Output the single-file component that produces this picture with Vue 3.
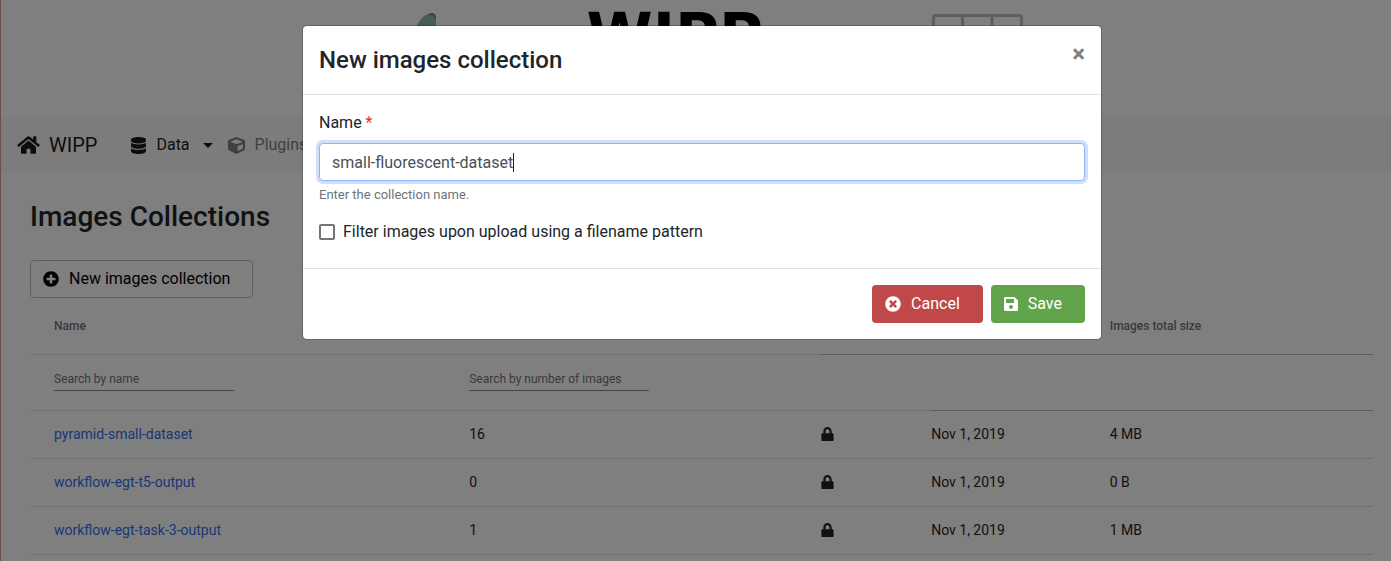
<script setup>
import { ref } from 'vue'

const name = ref('small-fluorescent-dataset')
const useFilter = ref(false)
const rows = [
  { name: 'pyramid-small-dataset', images: 16, date: 'Nov 1, 2019', size: '4 MB' },
  { name: 'workflow-egt-t5-output', images: 0, date: 'Nov 1, 2019', size: '0 B' },
  { name: 'workflow-egt-task-3-output', images: 1, date: 'Nov 1, 2019', size: '1 MB' },
]
</script>

<template>
  <div class="page">
    <header class="banner">
      <svg class="leaf" viewBox="0 0 50 104" aria-hidden="true">
        <path fill="#94b4b0" d="M10 24C17 9 21 3 27 1Q35-2 35 5V104H10Z" />
        <path fill="#6d8f8b" d="M27 1Q35-2 35 6L32 3Z" />
      </svg>
      <div class="wordmark">WIPP</div>
      <svg class="plate" viewBox="0 0 91 90" aria-hidden="true">
        <rect x="1.5" y="2.5" width="88" height="86" rx="2" />
        <path d="M30.5 2V89M60 2V89M1 31.5H90M1 60H90" />
      </svg>
    </header>

    <nav class="navbar">
      <a class="brand" href="#">
        <svg class="i-home" viewBox="0 0 576 512" aria-hidden="true"><path d="M280.37 148.26L96 300.11V464a16 16 0 0 0 16 16l112.06-.29a16 16 0 0 0 15.92-16V368a16 16 0 0 1 16-16h64a16 16 0 0 1 16 16v95.64a16 16 0 0 0 16 16.05L464 480a16 16 0 0 0 16-16V300L295.67 148.26a12.19 12.19 0 0 0-15.3 0zM571.6 251.47L488 182.56V44.05a12 12 0 0 0-12-12h-56a12 12 0 0 0-12 12v72.61L318.47 43a48 48 0 0 0-61 0L4.34 251.47a12 12 0 0 0-1.6 16.9l25.5 31A12 12 0 0 0 45.15 301l235.22-193.74a12.19 12.19 0 0 1 15.3 0L530.9 301a12 12 0 0 0 16.9-1.6l25.5-31a12 12 0 0 0-1.7-16.93z" /></svg>
        WIPP
      </a>
      <a class="nav-link" href="#">
        <svg class="i-data" viewBox="0 0 448 512" aria-hidden="true"><path d="M448 73.143v45.714C448 159.143 347.667 192 224 192S0 159.143 0 118.857V73.143C0 32.857 100.333 0 224 0s224 32.857 224 73.143zM448 176v102.857C448 319.143 347.667 352 224 352S0 319.143 0 278.857V176c48.125 33.143 136.208 48.572 224 48.572S399.874 209.143 448 176zm0 160v102.857C448 479.143 347.667 512 224 512S0 479.143 0 438.857V336c48.125 33.143 136.208 48.572 224 48.572S399.874 369.143 448 336z" /></svg>
        Data
        <span class="caret-down"></span>
      </a>
      <a class="nav-link muted" href="#">
        <svg class="i-cube" viewBox="0 0 512 512" aria-hidden="true"><path d="M239.1 6.3l-208 78c-18.7 7-31.1 25-31.1 45v225.1c0 18.2 10.3 34.8 26.5 42.9l208 104c13.5 6.8 29.4 6.8 42.9 0l208-104c16.3-8.1 26.5-24.8 26.5-42.9V129.3c0-20-12.4-37.9-31.1-44.9l-208-78C262 2.2 250 2.2 239.1 6.3zM256 68.4l192 72v1.1l-192 78-192-78v-1.1l192-72zm32 356V275.5l160-65v133.9l-160 80z" /></svg>
        Plugins
      </a>
    </nav>

    <main class="content">
      <h1>Images Collections</h1>
      <button class="btn outline" type="button">
        <svg class="i-btn" viewBox="0 0 512 512" aria-hidden="true"><path d="M256 8C119 8 8 119 8 256s111 248 248 248 248-111 248-248S393 8 256 8zm144 276c0 6.6-5.4 12-12 12h-92v92c0 6.6-5.4 12-12 12h-56c-6.6 0-12-5.4-12-12v-92h-92c-6.6 0-12-5.4-12-12v-56c0-6.6 5.4-12 12-12h92v-92c0-6.6 5.4-12 12-12h56c6.6 0 12 5.4 12 12v92h92c6.6 0 12 5.4 12 12v56z" /></svg>
        New images collection
      </button>

      <table>
        <colgroup>
          <col class="c-name" /><col class="c-images" /><col class="c-lock" /><col class="c-date" /><col />
        </colgroup>
        <thead>
          <tr class="head">
            <th scope="col">Name</th>
            <th scope="col" aria-label="Number of images"></th>
            <th scope="col" class="strong" aria-label="Locked"></th>
            <th scope="col" class="strong" aria-label="Creation date"></th>
            <th scope="col" class="strong">Images total size</th>
          </tr>
          <tr class="filters">
            <td><input type="text" placeholder="Search by name" aria-label="Search by name" /></td>
            <td><input type="text" placeholder="Search by number of images" aria-label="Search by number of images" /></td>
            <td></td>
            <td class="strong"></td>
            <td class="strong"></td>
          </tr>
        </thead>
        <tbody>
          <tr v-for="row in rows" :key="row.name">
            <td><a href="#">{{ row.name }}</a></td>
            <td>{{ row.images }}</td>
            <td><svg class="i-lock" viewBox="0 0 448 512" role="img" aria-label="Locked"><path d="M400 224h-24v-72C376 68.2 307.8 0 224 0S72 68.2 72 152v72H48c-26.5 0-48 21.5-48 48v192c0 26.5 21.5 48 48 48h352c26.5 0 48-21.5 48-48V272c0-26.5-21.5-48-48-48zm-104 0H152v-72c0-39.7 32.3-72 72-72s72 32.3 72 72v72z" /></svg></td>
            <td>{{ row.date }}</td>
            <td>{{ row.size }}</td>
          </tr>
        </tbody>
      </table>
    </main>

    <div class="backdrop">
      <form class="modal" role="dialog" aria-labelledby="modal-title" @submit.prevent>
        <div class="modal-header">
          <h2 id="modal-title">New images collection</h2>
          <button class="close" type="button" aria-label="Close">×</button>
        </div>
        <div class="modal-body">
          <label class="field-label" for="collection-name">Name <span class="required">*</span></label>
          <div class="field">
            <input id="collection-name" v-model="name" type="text" />
            <span class="text-cursor"></span>
          </div>
          <small>Enter the collection name.</small>
          <label class="check"><input v-model="useFilter" type="checkbox" />Filter images upon upload using a filename pattern</label>
        </div>
        <div class="modal-footer">
          <button class="btn danger" type="button">
            <svg class="i-btn" viewBox="0 0 512 512" aria-hidden="true"><path d="M256 8C119 8 8 119 8 256s111 248 248 248 248-111 248-248S393 8 256 8zm121.6 313.1c4.7 4.7 4.7 12.3 0 17L338 377.6c-4.7 4.7-12.3 4.7-17 0L256 312l-65.1 65.6c-4.7 4.7-12.3 4.7-17 0L134.4 338c-4.7-4.7-4.7-12.3 0-17l65.6-65-65.6-65.1c-4.7-4.7-4.7-12.3 0-17l39.6-39.6c4.7-4.7 12.3-4.7 17 0l65 65.7 65.1-65.6c4.7-4.7 12.3-4.7 17 0l39.6 39.6c4.7 4.7 4.7 12.3 0 17L312 256l65.6 65.1z" /></svg>
            Cancel
          </button>
          <button class="btn success" type="submit">
            <svg class="i-save" viewBox="0 0 448 512" aria-hidden="true"><path d="M433.941 129.941l-83.882-83.882A48 48 0 0 0 316.118 32H48C21.49 32 0 53.49 0 80v352c0 26.51 21.49 48 48 48h352c26.51 0 48-21.49 48-48V163.882a48 48 0 0 0-14.059-33.941zM224 416c-35.346 0-64-28.654-64-64 0-35.346 28.654-64 64-64s64 28.654 64 64c0 35.346-28.654 64-64 64zm96-304.52V212c0 6.627-5.373 12-12 12H76c-6.627 0-12-5.373-12-12V108c0-6.627 5.373-12 12-12h228.52c3.183 0 6.235 1.264 8.485 3.515l3.48 3.48A11.996 11.996 0 0 1 320 111.48z" /></svg>
            Save
          </button>
        </div>
      </form>
    </div>
  </div>
</template>

<style>
html, body { background: #808080; }
</style>

<style scoped>
* { box-sizing: border-box; }
.page {
  position: relative;
  min-height: 100vh;
  border-left: 1px solid #65534c;
  background: #fff;
  color: #212529;
  font: 400 16px/24px Roboto, sans-serif;
  overflow: hidden;
}
svg { display: block; flex: none; fill: currentColor; }
a { text-decoration: none; }
button, input { font: inherit; }

.banner {
  display: flex;
  justify-content: center;
  height: 117px;
  padding: 13px 0 0 31px;
  overflow: hidden;
}
.leaf { width: 50px; height: 104px; margin-right: 136px; }
.wordmark {
  width: 177px;
  margin-right: 168px;
  color: #000;
  font: 700 60px/44px "DejaVu Sans", sans-serif;
}
.plate { width: 91px; height: 90px; fill: none; stroke: #b4c0bc; stroke-width: 3; }

.navbar {
  display: flex;
  align-items: center;
  height: 56px;
  padding: 0 16px;
  background: #f8f9fa;
}
.brand, .nav-link { display: flex; align-items: center; color: #1a1a1a; }
.brand { gap: 9px; margin-right: 34px; font-size: 20px; }
.nav-link { gap: 10px; margin-right: 15px; }
.muted { color: #808080; }
.i-home { width: 23px; height: 20px; }
.i-data { width: 15px; height: 17px; }
.i-cube { width: 17px; height: 17px; }
.caret-down {
  margin-left: 3px;
  border: 5px solid transparent;
  border-top-color: currentColor;
  border-bottom: 0;
}

.content { padding: 27px 18px 0 29px; }
h1, h2 { margin: 0; font-weight: 500; }
h1 { margin-bottom: 26px; font-size: 28px; line-height: 34px; }
.btn {
  display: flex;
  align-items: center;
  gap: 10px;
  height: 38px;
  padding: 0 22px 0 12px;
  border: 1px solid transparent;
  border-radius: 4px;
  color: #fff;
}
.outline { background: #fff; border-color: #bbb; color: #000; }
.i-btn { width: 16px; height: 16px; }
.i-save { width: 14px; height: 16px; }

table { width: 100%; border-collapse: separate; border-spacing: 0; table-layout: fixed; font-size: 14px; line-height: 20px; }
.c-name { width: 32.7%; }
.c-images { width: 26.2%; }
.c-lock { width: 8.2%; }
.c-date { width: 13.3%; }
th, td { height: 48px; padding: 0; border-bottom: 1px solid #dfdfdf; text-align: left; vertical-align: middle; }
th:first-child, td:first-child { padding-left: 24px; }
tbody td { padding-bottom: 2px; }
.head th { height: 57px; color: #757575; font-size: 12px; font-weight: 500; }
.filters td { height: 56px; padding-bottom: 7px; }
.head .strong, .filters .strong { border-color: #bbb; }
.filters input {
  display: block;
  width: 180px;
  height: 24px;
  padding: 0;
  border: 0;
  border-bottom: 1px solid #8c8c8c;
  background: transparent;
  font-size: 12px;
  outline: 0;
}
.filters input::placeholder { color: #757575; opacity: 1; }
tbody a { color: #356fe8; }
.i-lock { width: 13px; height: 14px; }

.backdrop {
  position: absolute;
  inset: 0;
  padding: 25px 0 0 12px;
  background: rgba(0, 0, 0, 0.5);
}
.modal {
  width: 100%;
  max-width: 800px;
  margin: 0 auto;
  border: 1px solid rgba(0, 0, 0, 0.2);
  border-radius: 5px;
  background: #fff;
  background-clip: padding-box;
}
.modal-header {
  display: flex;
  align-items: flex-start;
  justify-content: space-between;
  padding: 16px;
  border-bottom: 1px solid #dee2e6;
}
h2 { font-size: 24px; line-height: 36px; }
.close {
  padding: 0;
  border: 0;
  background: none;
  color: #7f7f7f;
  font-size: 24px;
  font-weight: 700;
  line-height: 24px;
}
.modal-body { display: flex; flex-direction: column; padding: 16px 16px 24px; }
.field-label { margin-bottom: 8px; }
.required { color: #d0402b; }
.field { position: relative; }
.field input {
  display: block;
  width: 100%;
  height: 38px;
  padding: 0 12px;
  border: 1px solid #8bb4f9;
  border-radius: 4px;
  box-shadow: 0 0 0 3px #d0defc;
  color: #495057;
  outline: 0;
}
.text-cursor { position: absolute; top: 10px; left: 194px; width: 1px; height: 19px; background: #212529; }
small { margin: 4px 0 16px; color: #6c757d; font-size: 13px; line-height: 19px; }
.check { display: flex; align-items: center; gap: 8px; }
.check input {
  width: 16px;
  height: 16px;
  margin: 0;
  border: 2px solid #757575;
  border-radius: 2px;
  background: #fff;
  appearance: none;
}
.check input:checked { background: #356fe8; }
.modal-footer { display: flex; justify-content: flex-end; gap: 8px; padding: 16px; border-top: 1px solid #dee2e6; }
.danger { background: #c04848; }
.success { background: #62a44b; }
</style>
